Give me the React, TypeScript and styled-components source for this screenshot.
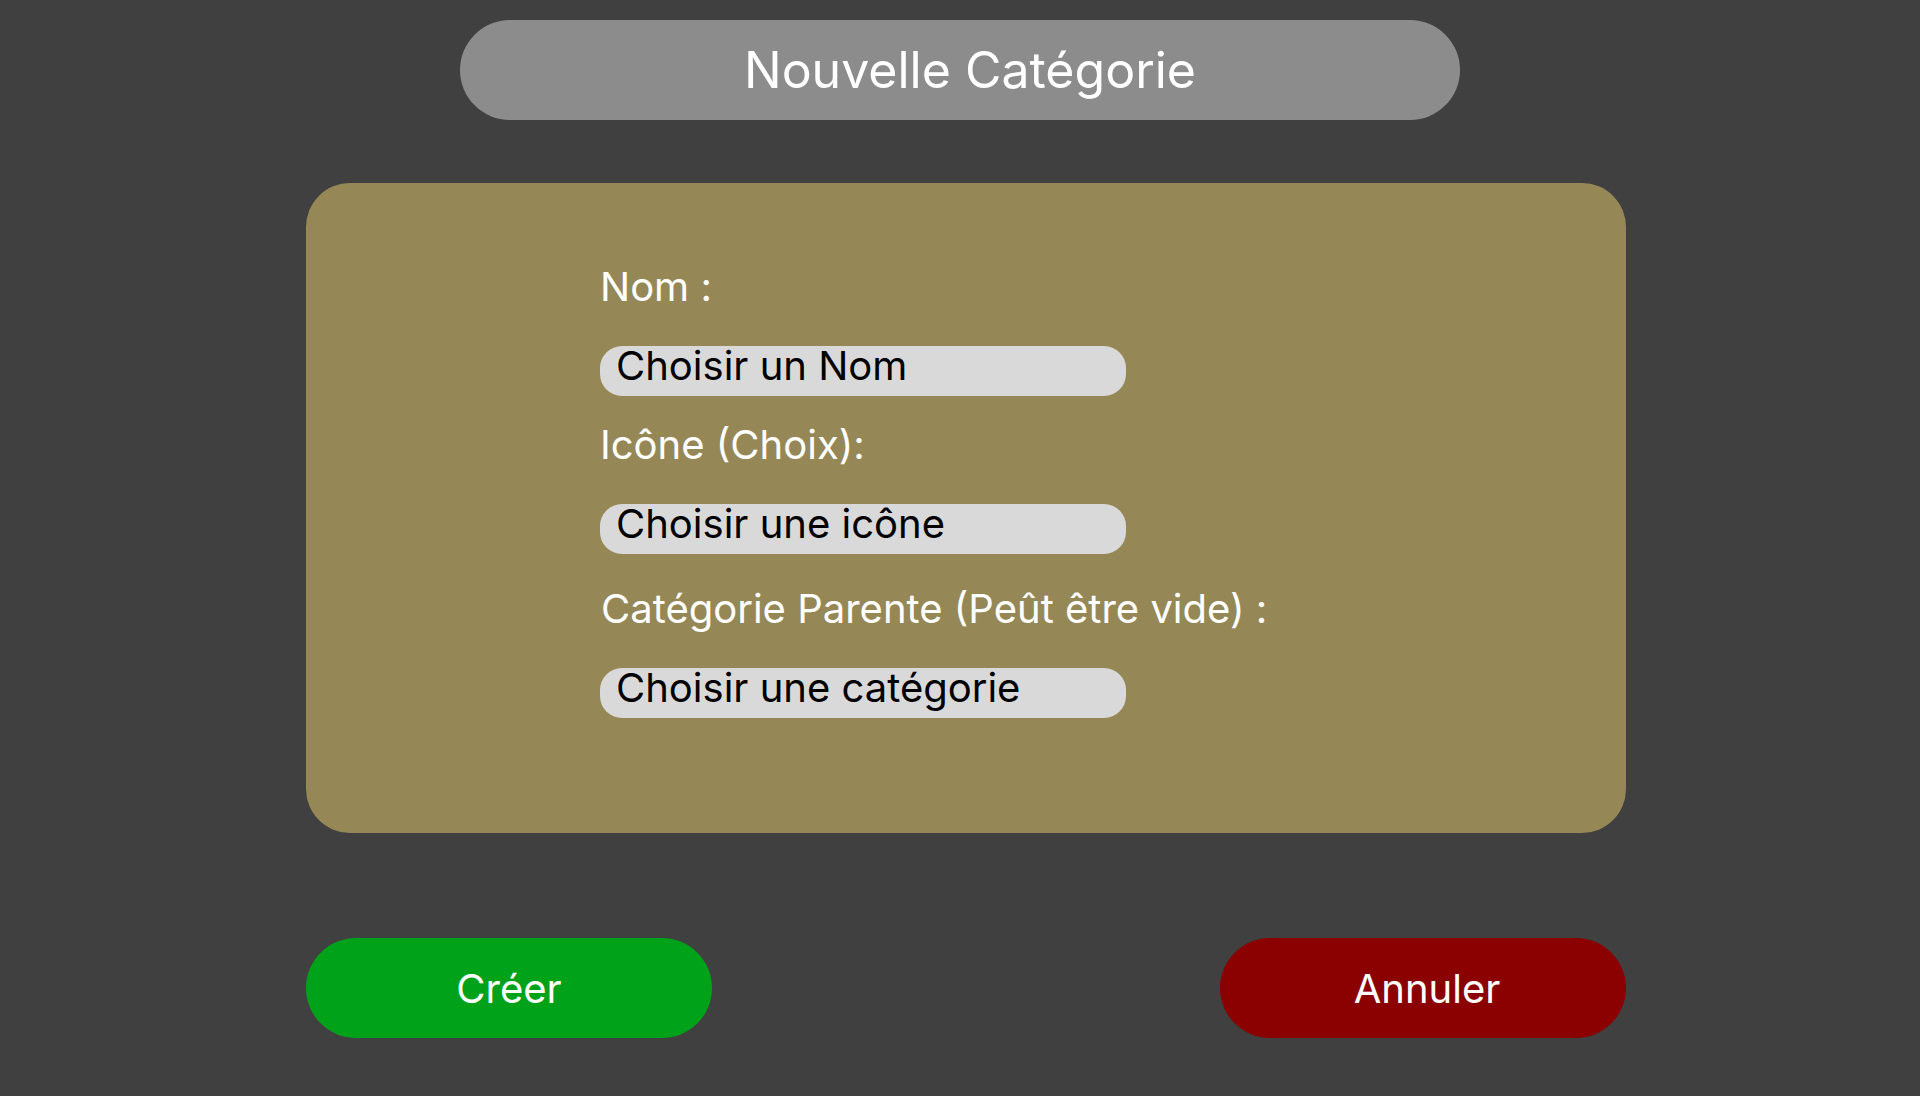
import React from "react";
import styled, { createGlobalStyle } from "styled-components";

const GlobalStyle = createGlobalStyle`
  html, body {
    margin: 0;
    padding: 0;
    background: #404040;
    font-family: Inter, "Noto Sans", "Liberation Sans", sans-serif;
  }
  * { box-sizing: border-box; }
`;

const Page = styled.div`
  width: 1920px;
  height: 1096px;
  background: #404040;
  display: flex;
  flex-direction: column;
  padding-top: 20px;
`;

const HeaderRow = styled.div`
  display: flex;
  justify-content: center;
`;

const TitleBar = styled.h1`
  margin: 0;
  width: 1000px;
  height: 100px;
  border-radius: 50px;
  background: #8c8c8c;
  color: #ffffff;
  font-size: 50px;
  font-weight: 400;
  display: flex;
  align-items: center;
  justify-content: center;
  padding-left: 20px;
`;

const Content = styled.div`
  margin-left: 306px;
  width: 1320px;
  display: flex;
  flex-direction: column;
`;

const Panel = styled.section`
  margin-top: 63px;
  height: 650px;
  border-radius: 44px;
  background: #968856;
  padding: 80px 0 0 294px;
  display: flex;
  flex-direction: column;
`;

const Field = styled.div<{ $top: number }>`
  display: flex;
  flex-direction: column;
  gap: 35px;
  margin-top: ${(p) => p.$top}px;
`;

const Label = styled.label<{ $indent?: number }>`
  color: #ffffff;
  font-size: 40px;
  line-height: 48px;
  font-weight: 400;
  padding-left: ${(p) => p.$indent ?? 0}px;
`;

const Input = styled.div`
  width: 526px;
  height: 50px;
  border-radius: 22px;
  background: #d9d9d9;
  color: #000000;
  font-size: 40px;
  line-height: 40px;
  padding-left: 16px;
  white-space: nowrap;
`;

const ButtonRow = styled.div`
  margin-top: 105px;
  display: flex;
  justify-content: space-between;
`;

const ActionButton = styled.button<{ $bg: string; $shift?: number }>`
  width: 406px;
  height: 100px;
  border: none;
  border-radius: 50px;
  background: ${(p) => p.$bg};
  color: #ffffff;
  font-family: Inter, "Noto Sans", "Liberation Sans", sans-serif;
  font-size: 40px;
  font-weight: 400;
  display: flex;
  align-items: center;
  justify-content: center;
  padding: 0 0 0 ${(p) => p.$shift ?? 0}px;
  cursor: pointer;
`;

export default function App() {
  return (
    <>
      <GlobalStyle />
      <Page>
        <HeaderRow>
          <TitleBar>Nouvelle Catégorie</TitleBar>
        </HeaderRow>
        <Content>
          <Panel>
            <Field $top={0}>
              <Label>Nom :</Label>
              <Input>Choisir un Nom</Input>
            </Field>
            <Field $top={25}>
              <Label>Icône (Choix):</Label>
              <Input>Choisir une icône</Input>
            </Field>
            <Field $top={31}>
              <Label $indent={1}>Catégorie Parente (Peût être vide) :</Label>
              <Input>Choisir une catégorie</Input>
            </Field>
          </Panel>
          <ButtonRow>
            <ActionButton $bg="#00a219">Créer</ActionButton>
            <ActionButton $bg="#8b0000" $shift={8}>
              Annuler
            </ActionButton>
          </ButtonRow>
        </Content>
      </Page>
    </>
  );
}
